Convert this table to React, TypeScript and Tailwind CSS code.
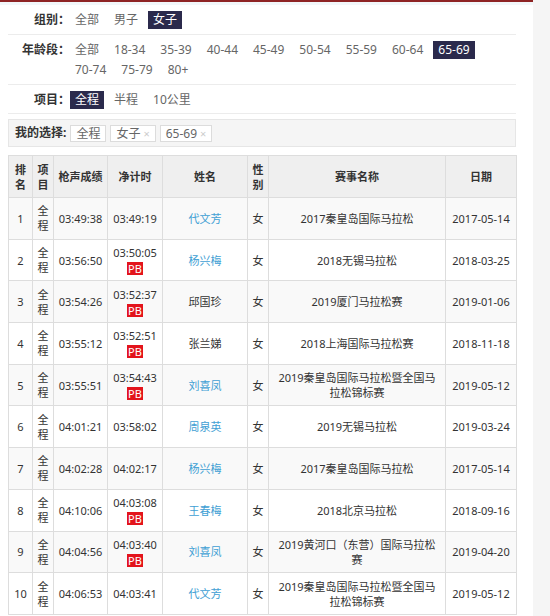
import React from 'react';

interface IResult {
    rank: number;
    gun: string;
    net: string;
    pb: boolean;
    name: string;
    link: boolean;
    race: string[];
    date: string;
}

const results: IResult[] = [
    {rank: 1, gun: '03:49:38', net: '03:49:19', pb: false, name: '代文芳', link: true, race: ['2017秦皇岛国际马拉松'], date: '2017-05-14'},
    {rank: 2, gun: '03:56:50', net: '03:50:05', pb: true, name: '杨兴梅', link: true, race: ['2018无锡马拉松'], date: '2018-03-25'},
    {rank: 3, gun: '03:54:26', net: '03:52:37', pb: true, name: '邱国珍', link: false, race: ['2019厦门马拉松赛'], date: '2019-01-06'},
    {rank: 4, gun: '03:55:12', net: '03:52:51', pb: true, name: '张兰娣', link: false, race: ['2018上海国际马拉松赛'], date: '2018-11-18'},
    {rank: 5, gun: '03:55:51', net: '03:54:43', pb: true, name: '刘喜凤', link: true, race: ['2019秦皇岛国际马拉松暨全国马', '拉松锦标赛'], date: '2019-05-12'},
    {rank: 6, gun: '04:01:21', net: '03:58:02', pb: false, name: '周泉英', link: true, race: ['2019无锡马拉松'], date: '2019-03-24'},
    {rank: 7, gun: '04:02:28', net: '04:02:17', pb: false, name: '杨兴梅', link: true, race: ['2017秦皇岛国际马拉松'], date: '2017-05-14'},
    {rank: 8, gun: '04:10:06', net: '04:03:08', pb: true, name: '王春梅', link: true, race: ['2018北京马拉松'], date: '2018-09-16'},
    {rank: 9, gun: '04:04:56', net: '04:03:40', pb: true, name: '刘喜凤', link: true, race: ['2019黄河口（东营）国际马拉松', '赛'], date: '2019-04-20'},
    {rank: 10, gun: '04:06:53', net: '04:03:41', pb: false, name: '代文芳', link: true, race: ['2019秦皇岛国际马拉松暨全国马', '拉松锦标赛'], date: '2019-05-12'},
];

const ages: string[] = ['全部', '18-34', '35-39', '40-44', '45-49', '50-54', '55-59', '60-64', '65-69', '70-74', '75-79', '80+'];

function Option({label, active}: {label: string, active?: boolean}) {
    return (
        <span className={"h-[18px] leading-[18px] px-[5px] mr-[5px] whitespace-nowrap " +
            (active ? "bg-[#2b2a4c] text-white" : "text-[#666]")}>{label}</span>
    );
}

function FilterRow({label, items, active, className}: {label: string, items: string[], active: string, className: string}) {
    return (
        <div className={"flex border-b border-[#ececec] " + className}>
            <div className="w-[62px] shrink-0 text-right font-bold text-[#333] leading-[18px]">{label}</div>
            <div className="flex flex-wrap gap-y-[2px]">
                {items.map((item: string) => <Option key={item} label={item} active={item === active}/>)}
            </div>
        </div>
    );
}

function Tag({label, removable}: {label: string, removable?: boolean}) {
    return (
        <span className="h-[17px] leading-[15px] px-[5px] bg-white border border-[#dcdcdc] text-[#666] whitespace-nowrap">
            {label}
            {removable && <span className="ml-[3px] text-[#cccccc] text-[11px]">×</span>}
        </span>
    );
}

const cell = "border border-[#dddddd] p-0";

function App() {
    return (
        <div className="flex w-[550px] min-h-[616px] text-[12px] text-[#333]"
             style={{fontFamily: '"Noto Sans", "Noto Sans CJK SC", sans-serif'}}>
            <div className="w-[533px] bg-white">
                <div className="h-[2px] bg-[#8e2424]"/>
                <div className="h-[3px] bg-[#f2f7fa]"/>
                <div className="pl-[8px] pr-[17px]">
                    <FilterRow label="组别：" items={['全部', '男子', '女子']} active="女子" className="pt-[6px] pb-[5px]"/>
                    <FilterRow label="年龄段：" items={ages} active="65-69" className="pt-[6px] pb-[5px]"/>
                    <FilterRow label="项目：" items={['全程', '半程', '10公里']} active="全程" className="pt-[6px] pb-[4px]"/>

                    <div className="mt-[5px] h-[28px] flex items-center bg-[#f5f5f5] border border-[#e6e6e6] pl-[6px]">
                        <span className="font-bold text-[#333] mr-[4px]">我的选择:</span>
                        <div className="flex gap-[4px]">
                            <Tag label="全程"/>
                            <Tag label="女子" removable/>
                            <Tag label="65-69" removable/>
                        </div>
                    </div>

                    <table className="mt-[8px] w-[508px] table-fixed border-collapse text-center text-[11px] leading-[15px]">
                        <colgroup>
                            <col className="w-[24px]"/>
                            <col className="w-[21px]"/>
                            <col className="w-[54px]"/>
                            <col className="w-[55px]"/>
                            <col className="w-[85px]"/>
                            <col className="w-[21px]"/>
                            <col className="w-[177px]"/>
                            <col className="w-[71px]"/>
                        </colgroup>
                        <thead>
                        <tr className="h-[42px] bg-[#efefef] font-bold">
                            <th className={cell}>排<br/>名</th>
                            <th className={cell}>项<br/>目</th>
                            <th className={cell + " whitespace-nowrap"}>枪声成绩</th>
                            <th className={cell}>净计时</th>
                            <th className={cell}>姓名</th>
                            <th className={cell}>性<br/>别</th>
                            <th className={cell}>赛事名称</th>
                            <th className={cell}>日期</th>
                        </tr>
                        </thead>
                        <tbody>
                        {results.map((r: IResult) => (
                            <tr key={r.rank} className={"h-[41.7px] " + (r.rank % 2 === 1 ? "bg-[#f9f9f9]" : "bg-white")}>
                                <td className={cell}>{r.rank}</td>
                                <td className={cell}>全<br/>程</td>
                                <td className={cell + " whitespace-nowrap"}>{r.gun}</td>
                                <td className={cell + " whitespace-nowrap"}>
                                    <div>{r.net}</div>
                                    {r.pb && <div className="flex justify-center mt-[2px]">
                                        <span className="h-[13px] leading-[13px] px-[1px] bg-[#e3141c] text-white text-[11px]">PB</span>
                                    </div>}
                                </td>
                                <td className={cell + (r.link ? " text-[#3fa0d4]" : "")}>{r.name}</td>
                                <td className={cell}>女</td>
                                <td className={cell + " whitespace-nowrap"}>
                                    {r.race.map((line: string) => <div key={line}>{line}</div>)}
                                </td>
                                <td className={cell + " whitespace-nowrap"}>{r.date}</td>
                            </tr>
                        ))}
                        </tbody>
                    </table>
                </div>
            </div>
            <div className="flex-1 bg-[#f5f5f5]"/>
        </div>
    );
}

export default App;
